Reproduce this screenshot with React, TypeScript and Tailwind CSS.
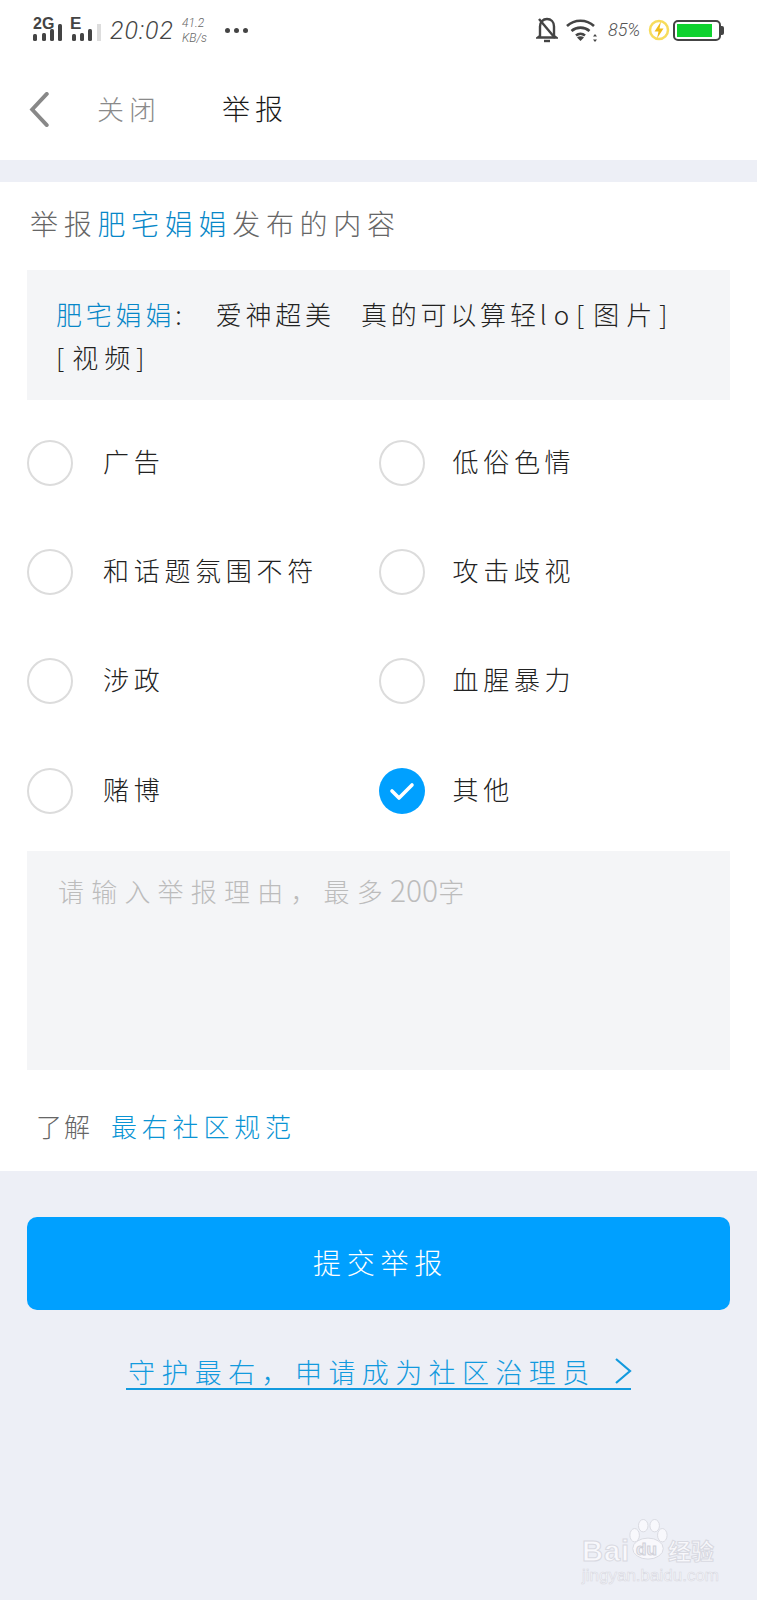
import React from "react";

const CJK = "font-['Noto_Sans_CJK_SC','Noto_Sans',sans-serif] font-light";

function Signal() {
  const a = [[33, 33, 7], [42, 32, 8], [50, 28, 12], [58, 23, 17]];
  const b = [[72, 33, 7], [80, 32, 8], [88, 28, 12]];
  return (
    <svg width="70" height="30" viewBox="33 14 70 30" className="shrink-0">
      <text x="33" y="28" fontFamily="Liberation Sans" fontWeight="700" fontSize="16" fill="#444">2G</text>
      <text x="70" y="28" fontFamily="Liberation Sans" fontWeight="700" fontSize="17" fill="#444">E</text>
      {a.map(([x, y, h]) => <rect key={x} x={x} y={y} width="4" height={h} rx="1.5" fill="#444" />)}
      {b.map(([x, y, h]) => <rect key={x} x={x} y={y} width="4" height={h} rx="1.5" fill="#444" />)}
      <rect x="97" y="23" width="4" height="17" fill="#ddd" />
    </svg>
  );
}

function BellOff() {
  return (
    <svg width="22" height="26" viewBox="0 0 22 26" fill="none" stroke="#444" strokeWidth="2.4" className="shrink-0">
      <path d="M4 19V9.5C4 5 7 2 11 2s7 3 7 7.5V19l2 1.5H2L4 19Z" />
      <path d="M8 24h6" />
      <path d="M3 2l16 19" />
    </svg>
  );
}

function Wifi() {
  return (
    <svg width="32" height="24" viewBox="0 0 32 24" fill="none" stroke="#444" strokeWidth="2.6" className="shrink-0">
      <path d="M1 8c7.5-7 19.500-7 27 0" />
      <path d="M5.500 13c5-4.500 13-4.500 18 0" />
      <path d="M10 17.500c2.600-2.200 6.400-2.200 9 0" />
      <path d="M14.500 23l-3.500-3.600c2-1.400 5-1.400 7 0L14.500 23Z" fill="#444" stroke="none" />
      <path d="M29 16l2 2.500h-4L29 16ZM29 24l2-2.500h-4L29 24Z" fill="#444" stroke="none" />
    </svg>
  );
}

function Charging() {
  return (
    <svg width="22" height="24" viewBox="0 0 22 24" className="shrink-0">
      <circle cx="11" cy="12" r="9" fill="none" stroke="#f7dc5c" strokeWidth="2.500" />
      <path d="M13 3.500 6.500 13.500h4L9 20.500l6.500-10h-4L13 3.500Z" fill="#f0bd1a" />
    </svg>
  );
}

function Battery() {
  return (
    <div className="flex items-center shrink-0">
      <div className="w-[48px] h-[21px] rounded-[5px] border-2 border-[#444] p-[2px] pr-[7px]">
        <div className="w-full h-full bg-[#0fd22f]" />
      </div>
      <div className="w-[3px] h-[9px] rounded-r-[2px] bg-[#444]" />
    </div>
  );
}

function StatusBar() {
  return (
    <div className="h-[60px] pl-[33px] pr-[33px] flex items-center justify-between">
      <div className="flex items-center">
        <Signal />
        <span className="ml-[7px] w-[66px] font-['Roboto',sans-serif] font-light italic text-[25px] leading-none tracking-[1px] text-[#444]">20:02</span>
        <div className="ml-[6px] w-[28px] flex flex-col gap-[5px] font-['Roboto',sans-serif] font-light italic text-[12px] leading-[10px] text-[#666]">
          <span>41.2</span>
          <span>KB/s</span>
        </div>
        <div className="ml-[15px] flex gap-[4px]">
          <span className="w-[5px] h-[5px] rounded-full bg-[#444]" />
          <span className="w-[5px] h-[5px] rounded-full bg-[#444]" />
          <span className="w-[5px] h-[5px] rounded-full bg-[#444]" />
        </div>
      </div>
      <div className="flex items-center">
        <BellOff />
        <div className="ml-[8px]"><Wifi /></div>
        <span className="ml-[10px] w-[32px] font-['Roboto',sans-serif] font-light italic text-[18px] leading-none text-[#555]">85%</span>
        <div className="ml-[8px]"><Charging /></div>
        <div className="ml-[3px]"><Battery /></div>
      </div>
    </div>
  );
}

function Option({ label, checked, right }: { label: string; checked?: boolean; right?: boolean }) {
  return (
    <div className="h-[109.330px] flex items-center">
      {checked ? (
        <div className="w-[46px] h-[46px] rounded-full bg-[#00a0ff] flex items-center justify-center shrink-0">
          <svg width="26" height="20" viewBox="0 0 26 20" fill="none" stroke="#fff" strokeWidth="3.600" strokeLinecap="round" strokeLinejoin="round">
            <path d="M3 10l7 7L23 4" />
          </svg>
        </div>
      ) : (
        <div className="w-[46px] h-[46px] rounded-full border-2 border-[#dcdcdc] shrink-0" />
      )}
      <span className={`${right ? "ml-[28px]" : "ml-[30px]"} -mt-[4px] text-[26px] leading-none tracking-[4.700px] text-[#222]`}>{label}</span>
    </div>
  );
}

function Watermark() {
  return (
    <div className="absolute left-[582px] top-[1518px] w-[140px] text-[#f8f8fc] font-['Liberation_Sans',sans-serif]">
      <div className="relative h-[46px]">
        <span className="absolute left-0 top-[18px] text-[29px] leading-[30px] font-bold tracking-[1px] [-webkit-text-stroke:1px_#d8d9e1]">Bai</span>
        <svg width="42" height="44" viewBox="0 0 44 44" className="absolute left-[45px] top-0" fill="#f8f8fc" stroke="#d8d9e1">
          <ellipse cx="8" cy="17" rx="5" ry="7" />
          <ellipse cx="17" cy="7" rx="5" ry="6.500" />
          <ellipse cx="29" cy="7" rx="5" ry="6.500" />
          <ellipse cx="37" cy="17" rx="5" ry="7" />
          <ellipse cx="22" cy="31" rx="16" ry="11" />
        </svg>
        <span className="absolute left-[54px] top-[22px] text-[17px] leading-[20px] font-bold text-[#f0f0f5] [-webkit-text-stroke:1px_#d0d1d9]">du</span>
        <span className="absolute left-[86px] top-[19px] text-[23px] leading-[26px] font-['Noto_Sans_CJK_SC',sans-serif] font-bold [-webkit-text-stroke:1px_#d8d9e1]">经验</span>
      </div>
      <div className="mt-[2px] text-[17px] leading-[20px] [-webkit-text-stroke:0.600px_#d8d9e1]">jingyan.baidu.com</div>
    </div>
  );
}

export default function App() {
  return (
    <div className={`relative w-[757px] h-[1600px] overflow-hidden bg-[#edeff6] ${CJK}`}>
      <div className="bg-white h-[160px]">
        <StatusBar />
        <div className="h-[100px] pl-[29px] flex items-center">
          <svg width="20" height="35" viewBox="0 0 20 36" fill="none" stroke="#888" strokeWidth="4" strokeLinecap="round" className="shrink-0 -mt-[1px]">
            <path d="M18 2 3 18l15 16" />
          </svg>
          <span className="ml-[48px] -mt-[4px] text-[27px] leading-none tracking-[5px] text-[#8a8a8a]">关闭</span>
          <span className="ml-[61px] -mt-[4px] text-[28px] leading-none tracking-[5px] text-[#1a1a1a]">举报</span>
        </div>
      </div>

      <div className="mt-[22px] bg-white h-[989px] px-[27px] flex flex-col">
        <div className="h-[88px] shrink-0 flex items-center pl-[3px] pb-[6px] text-[28px] leading-none tracking-[5.700px] text-[#666]">
          <span>举报</span>
          <span className="text-[#0787c8]">肥宅娟娟</span>
          <span>发布的内容</span>
        </div>

        <div className="h-[130px] shrink-0 bg-[#f4f5f7] pl-[29px] pr-[10px] pt-[22px] text-[26px] leading-[43px] tracking-[3.800px] text-[#222]">
          <span className="text-[#0787c8]">肥宅娟娟</span>
          <span className="tracking-[34px]">:</span>
          <span>爱神超美</span>
          <span className="ml-[26px]">真的可以算轻</span>
          <span className="tracking-[7px]">lo</span>
          <span className="tracking-[9px]">[</span>
          <span className="tracking-[7px]">图片</span>
          <span>]</span>
          <br />
          <span className="tracking-[8px]">[</span>
          <span className="tracking-[6px]">视频</span>
          <span>]</span>
        </div>

        <div className="mt-[8px] grid grid-cols-2 shrink-0 w-[703px]">
          <div>
            <Option label="广告" />
            <Option label="和话题氛围不符" />
            <Option label="涉政" />
            <Option label="赌博" />
          </div>
          <div>
            <Option right label="低俗色情" />
            <Option right label="攻击歧视" />
            <Option right label="血腥暴力" />
            <Option right label="其他" checked />
          </div>
        </div>

        <div className="mt-[6px] h-[219px] shrink-0 bg-[#f4f5f7] pl-[31px] pt-[21px] text-[26px] leading-[34px] tracking-[7.200px] text-[#bcbcbc]">
          请输入举报理由，最多<span className="tracking-[0px] text-[30px] leading-[34px]">200</span>字
        </div>

        <div className="h-[101px] shrink-0 pt-[10px] pl-[9px] flex items-center text-[26px] leading-none">
          <span className="tracking-[2px] text-[#666]">了解</span>
          <span className="ml-[19px] tracking-[4.800px] text-[#0a94d4]">最右社区规范</span>
        </div>
      </div>

      <div className="px-[27px] pt-[46px]">
        <div className="h-[93px] rounded-[10px] bg-[#00a0ff] pb-[4px] pl-[4px] flex items-center justify-center text-white text-[28px] leading-none tracking-[5.800px]">
          提交举报
        </div>
      </div>

      <div className="mt-[44px] flex justify-center">
        <div className="w-[505px] h-[36px] border-b-2 border-[#129ade] pl-[2px] flex items-center text-[#129ade] text-[27px] leading-none tracking-[6.400px] whitespace-nowrap">
          守护最右，申请成为社区治理员
          <svg width="18" height="28" viewBox="0 0 18 28" fill="none" stroke="#129ade" strokeWidth="2.200" className="ml-[18px] shrink-0">
            <path d="M2 2l14 12L2 26" />
          </svg>
        </div>
      </div>

      <Watermark />
    </div>
  );
}
